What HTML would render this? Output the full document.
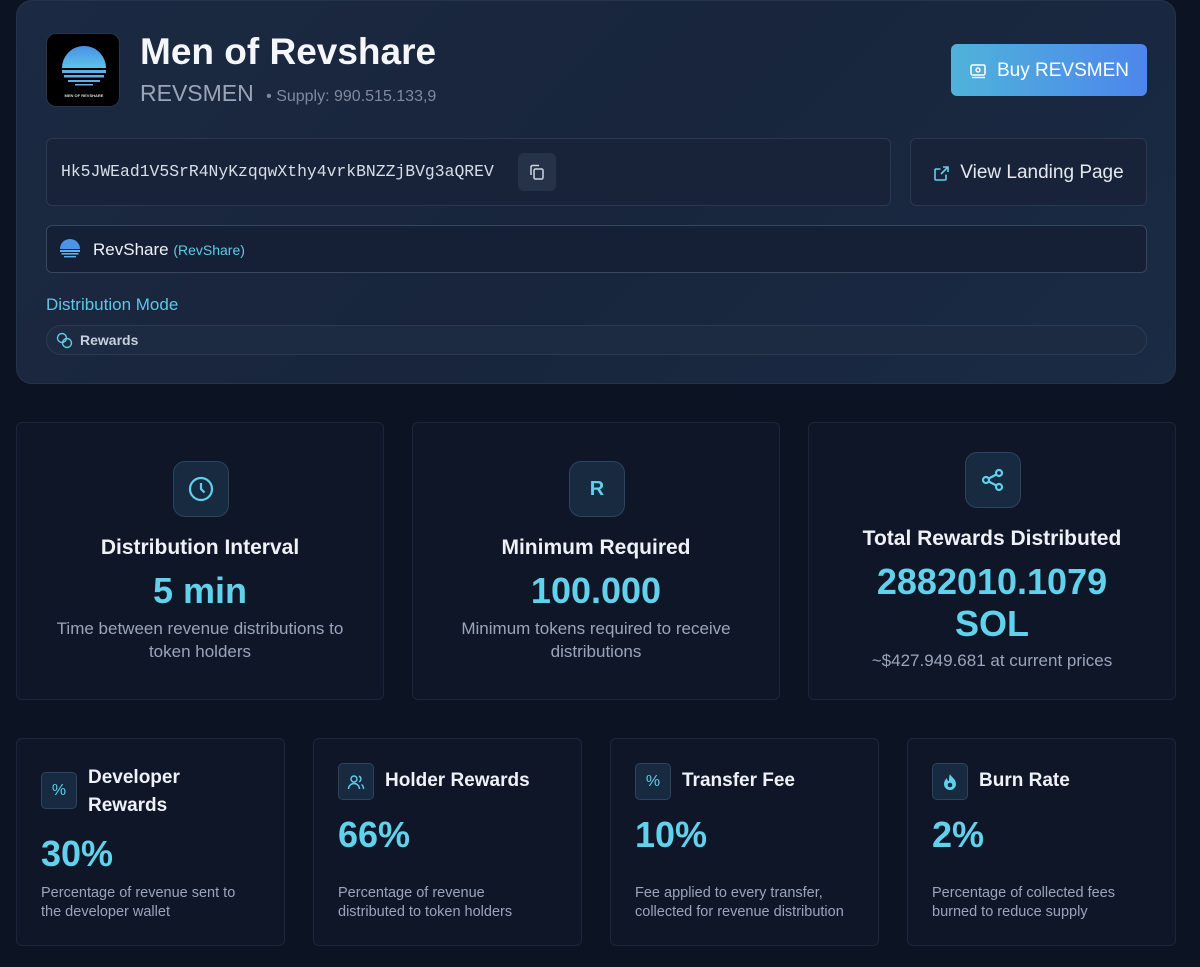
<!DOCTYPE html>
<html><head><meta charset="utf-8"><style>
*{box-sizing:border-box;margin:0;padding:0}
body{width:1200px;height:967px;background:#0c1322;font-family:"Liberation Sans",sans-serif;color:#e6ebf2;position:relative;overflow:hidden}
.abs{position:absolute}
.top{left:16px;top:0;width:1160px;height:384px;border-radius:16px;background:linear-gradient(135deg,#1b2942,#18253c 50%,#1a2b44);border:1px solid #26344b}
.box{position:absolute;border:1px solid #2a3850;border-radius:6px;background:#172238}
.card{position:absolute;background:#0f1628;border:1px solid #1d2739;border-radius:6px}
.ic{position:absolute;width:56px;height:56px;border-radius:12px;background:#172a40;border:1px solid #2b4460;display:flex;align-items:center;justify-content:center;color:#5fd0ea}
.sic{position:absolute;width:36px;height:37px;border-radius:5px;background:#172a40;border:1px solid #2b4460;display:flex;align-items:center;justify-content:center;color:#5fd0ea;font-size:16px}
.ct{position:absolute;left:0;width:100%;text-align:center}
.cyan{color:#62d2ec}
.gray{color:#9aa6b8}
</style></head><body>
<div class="abs top"></div>
<div class="abs" style="left:46px;top:33px;width:74px;height:74px;background:#000;border-radius:10px;border:1px solid #2a3448;overflow:hidden">
<svg width="74" height="74" viewBox="0 0 74 74"><defs><linearGradient id="g" x1="0" y1="0" x2="0" y2="1"><stop offset="0" stop-color="#4a90e8"/><stop offset="1" stop-color="#5cc4e8"/></linearGradient></defs>
<path d="M15 34 A22 22 0 0 1 59 34 Z" fill="url(#g)"/>
<rect x="15" y="36" width="44" height="3" fill="#5cb0e8"/><rect x="17" y="41" width="40" height="2.5" fill="#5cb0e8"/><rect x="21" y="46" width="32" height="2" fill="#5cb0e8"/><rect x="28" y="50" width="18" height="1.5" fill="#5cb0e8"/>
<text x="37" y="63" font-size="4" fill="#ddd" text-anchor="middle" font-family="Liberation Sans" font-weight="bold">MEN OF REVSHARE</text></svg></div>
<div class="abs" style="left:140px;top:31px;font-size:37px;font-weight:bold;color:#f4f6fa">Men of Revshare</div>
<div class="abs" style="left:140px;top:80px;font-size:23px;color:#9aa6b8">REVSMEN <span style="font-size:16px;color:#7e8a9c;margin-left:6px">• Supply: 990.515.133,9</span></div>
<div class="abs" style="left:951px;top:44px;width:196px;height:52px;border-radius:6px;background:linear-gradient(90deg,#4fb3da,#4d86ec);display:flex;align-items:center;justify-content:center;font-size:19px;color:#fff;padding-top:2px">
<svg width="18" height="16" viewBox="0 0 18 16" style="margin-right:10px"><rect x="2" y="2" width="14" height="10" rx="1.5" fill="none" stroke="#fff" stroke-width="1.5"/><circle cx="9" cy="7" r="2" fill="none" stroke="#fff" stroke-width="1.4"/><path d="M3 14.5h13" stroke="#fff" stroke-width="1.4"/></svg>Buy REVSMEN</div>
<div class="box" style="left:46px;top:138px;width:845px;height:68px;background:#182339"></div>
<div class="abs" style="left:61px;top:162px;font-family:'Liberation Mono',monospace;font-size:16.4px;color:#d8dee8">Hk5JWEad1V5SrR4NyKzqqwXthy4vrkBNZZjBVg3aQREV</div>
<div class="abs" style="left:518px;top:153px;width:38px;height:38px;border-radius:6px;background:#263247;display:flex;align-items:center;justify-content:center">
<svg width="18" height="18" viewBox="0 0 18 18" fill="none" stroke="#d0d6e0" stroke-width="1.5"><rect x="6" y="6" width="9" height="10" rx="1.5"/><path d="M3 12V4a1.5 1.5 0 0 1 1.5-1.5H11"/></svg></div>
<div class="box" style="left:910px;top:138px;width:237px;height:68px;background:#182339;display:flex;align-items:center;justify-content:center;font-size:19px;color:#e4e9f0;padding-top:2px">
<svg width="17" height="17" viewBox="0 0 17 17" fill="none" stroke="#5fd0ea" stroke-width="1.6" style="margin-right:10px"><path d="M13 9.5v4.5a1 1 0 0 1-1 1H3a1 1 0 0 1-1-1V5a1 1 0 0 1 1-1h4.5M10 2h5v5M15 2L8 9"/></svg>View Landing Page</div>
<div class="box" style="left:46px;top:225px;width:1101px;height:48px;background:#152036;border-color:#3a465c"></div>
<svg class="abs" style="left:60px;top:239px" width="20" height="20" viewBox="0 0 20 20"><path d="M0 10 A10 10 0 0 1 20 10Z" fill="#4d94e6"/><rect x="0" y="11" width="20" height="2" fill="#5ab3e8"/><rect x="1.5" y="14" width="17" height="1.6" fill="#5ab3e8"/><rect x="4" y="17" width="12" height="1.4" fill="#5ab3e8"/></svg>
<div class="abs" style="left:93px;top:240px;font-size:17px;color:#eef1f6">RevShare <span style="font-size:14px;color:#5fcbe6">(RevShare)</span></div>
<div class="abs cyan" style="left:46px;top:295px;font-size:17px;color:#5fc6e4">Distribution Mode</div>
<div class="abs" style="left:46px;top:325px;width:1101px;height:30px;border-radius:15px;background:#1c2a42;border:1px solid #2c3a52"></div>
<svg class="abs" style="left:56px;top:332px" width="17" height="17" viewBox="0 0 17 17" fill="none" stroke="#5fcbe6" stroke-width="1.4"><circle cx="6" cy="6" r="4.5"/><circle cx="11" cy="11" r="4.5"/></svg>
<div class="abs" style="left:80px;top:332px;font-size:14px;font-weight:bold;color:#c6cfdb">Rewards</div>

<div class="card" style="left:16px;top:422px;width:368px;height:278px">
<div class="ic" style="left:156px;top:38px"><svg width="28" height="28" viewBox="0 0 28 28" fill="none" stroke="#5fd0ea" stroke-width="2.2"><circle cx="14" cy="14" r="11"/><path d="M14 8v6l3.5 3.5"/></svg></div>
<div class="ct" style="top:113px;font-size:21px;font-weight:bold;color:#eef1f6">Distribution Interval</div>
<div class="ct cyan" style="top:147px;font-size:36px;font-weight:bold">5 min</div>
<div class="ct gray" style="top:194px;font-size:17px;line-height:23px;padding:0 30px">Time between revenue distributions to token holders</div></div>
<div class="card" style="left:412px;top:422px;width:368px;height:278px">
<div class="ic" style="left:156px;top:38px;font-size:20px;font-weight:bold">R</div>
<div class="ct" style="top:113px;font-size:21px;font-weight:bold;color:#eef1f6">Minimum Required</div>
<div class="ct cyan" style="top:147px;font-size:36px;font-weight:bold">100.000</div>
<div class="ct gray" style="top:194px;font-size:17px;line-height:23px;padding:0 40px">Minimum tokens required to receive distributions</div></div>
<div class="card" style="left:808px;top:422px;width:368px;height:278px">
<div class="ic" style="left:156px;top:29px"><svg width="26" height="26" viewBox="0 0 26 26" fill="none" stroke="#5fd0ea" stroke-width="2.2"><circle cx="19" cy="6" r="3"/><circle cx="6" cy="13" r="3"/><circle cx="19" cy="20" r="3"/><path d="M8.7 11.5l7.6-4M8.7 14.5l7.6 4"/></svg></div>
<div class="ct" style="top:104px;font-size:21px;font-weight:bold;color:#eef1f6">Total Rewards Distributed</div>
<div class="ct cyan" style="top:138px;font-size:36px;font-weight:bold;line-height:42px">2882010.1079<br>SOL</div>
<div class="ct gray" style="top:228px;font-size:17px">~$427.949.681 at current prices</div></div>

<div class="card" style="left:16px;top:738px;width:269px;height:208px">
<div class="sic" style="left:24px;top:33px">%</div>
<div class="abs" style="left:71px;top:25px;font-size:19px;font-weight:bold;line-height:28px;color:#eef1f6">Developer<br>Rewards</div>
<div class="abs cyan" style="left:24px;top:94px;font-size:36px;font-weight:bold">30%</div>
<div class="abs gray" style="left:24px;top:145px;font-size:14.5px;line-height:19px">Percentage of revenue sent to<br>the developer wallet</div></div>
<div class="card" style="left:313px;top:738px;width:269px;height:208px">
<div class="sic" style="left:24px;top:24px"><svg width="18" height="16" viewBox="0 0 18 16" fill="none" stroke="#5fd0ea" stroke-width="1.4"><circle cx="7" cy="5" r="3"/><path d="M1.5 15a5.5 5.5 0 0 1 11 0M12 2.2a3 3 0 0 1 0 5.6M14.5 10.5a5 5 0 0 1 2 4.5"/></svg></div>
<div class="abs" style="left:71px;top:31px;font-size:19px;font-weight:bold;color:#eef1f6">Holder Rewards</div>
<div class="abs cyan" style="left:24px;top:75px;font-size:36px;font-weight:bold">66%</div>
<div class="abs gray" style="left:24px;top:145px;font-size:14.5px;line-height:19px">Percentage of revenue<br>distributed to token holders</div></div>
<div class="card" style="left:610px;top:738px;width:269px;height:208px">
<div class="sic" style="left:24px;top:24px">%</div>
<div class="abs" style="left:71px;top:31px;font-size:19px;font-weight:bold;color:#eef1f6">Transfer Fee</div>
<div class="abs cyan" style="left:24px;top:75px;font-size:36px;font-weight:bold">10%</div>
<div class="abs gray" style="left:24px;top:145px;font-size:14.5px;line-height:19px">Fee applied to every transfer,<br>collected for revenue distribution</div></div>
<div class="card" style="left:907px;top:738px;width:269px;height:208px">
<div class="sic" style="left:24px;top:24px"><svg width="14" height="16" viewBox="0 0 14 16"><path d="M7 0C8 3 13 5 13 10a6 6 0 0 1-12 0C1 7 3 5 4 4c0 2 1 3 2 3C6 5 6 2 7 0z" fill="#5fd0ea"/><circle cx="7" cy="11" r="2.3" fill="#172a40"/></svg></div>
<div class="abs" style="left:71px;top:31px;font-size:19px;font-weight:bold;color:#eef1f6">Burn Rate</div>
<div class="abs cyan" style="left:24px;top:75px;font-size:36px;font-weight:bold">2%</div>
<div class="abs gray" style="left:24px;top:145px;font-size:14.5px;line-height:19px">Percentage of collected fees<br>burned to reduce supply</div></div>
</body></html>
